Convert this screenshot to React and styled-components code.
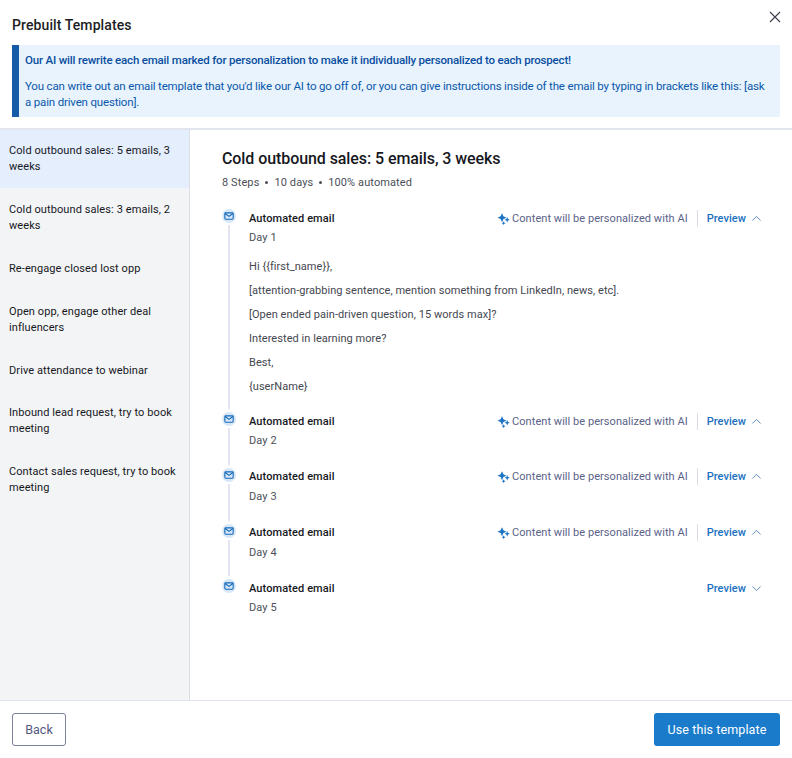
import React from "react";
import styled, { createGlobalStyle } from "styled-components";

const GlobalStyle = createGlobalStyle`
  html, body {
    margin: 0;
    padding: 0;
    background: #fff;
  }
  body {
    font-family: Roboto, "Liberation Sans", sans-serif;
    color: #16181d;
  }
`;

const Modal = styled.div`
  width: 792px;
  height: 758px;
  display: flex;
  flex-direction: column;
  background: #fff;
  overflow: hidden;
`;

const Header = styled.div`
  flex: none;
  padding: 0 12px 11px;
  border-bottom: 2px solid #e3e5ee;
`;

const TitleRow = styled.div`
  height: 45px;
  display: flex;
  align-items: flex-start;
  justify-content: space-between;
`;

const Title = styled.h1`
  margin: 15px 0 0;
  font-size: 14px;
  font-weight: 500;
  line-height: 20px;
  letter-spacing: 0.1px;
  color: #1c1e24;
`;

const CloseButton = styled.button`
  width: 14px;
  height: 14px;
  padding: 0;
  margin: 10px -2px 0 0;
  border: 0;
  background: none;
  color: #3a3d47;
  display: flex;
`;

const Banner = styled.div`
  background: #e8f3fd;
  border-left: 7px solid #155ca8;
  padding: 7px 12px 8px 6px;
  height: 72px;
  box-sizing: border-box;
  font-size: 11.5px;
  line-height: 16px;
  letter-spacing: -0.18px;
  color: #0b58ab;
`;

const BannerStrong = styled.p`
  margin: 0 0 10px;
  font-weight: 500;
  color: #0a4ea0;
`;

const BannerText = styled.p`
  margin: 0;
  letter-spacing: -0.17px;
`;

const Body = styled.div`
  flex: 1;
  min-height: 0;
  display: flex;
`;

const Sidebar = styled.nav`
  width: 189px;
  flex: none;
  background: #f3f4f6;
  border-right: 1px solid #dcdee6;
`;

const SideItem = styled.div`
  height: ${(p) => (p.$single ? "42.5px" : "59px")};
  padding: 13px 9px 0;
  box-sizing: border-box;
  border-bottom: 1px solid transparent;
  background-clip: padding-box;
  font-size: 11px;
  line-height: 16px;
  letter-spacing: 0.09px;
  color: #16181d;
  background-color: ${(p) => (p.$active ? "#e4eefd" : "transparent")};
`;

const Main = styled.main`
  flex: 1;
  min-width: 0;
  padding: 19px 30px 0 32px;
`;

const MainTitle = styled.h2`
  margin: 0;
  font-size: 16px;
  font-weight: 500;
  line-height: 20px;
  letter-spacing: -0.08px;
  color: #16181d;
`;

const Meta = styled.div`
  display: flex;
  align-items: center;
  gap: 6px;
  margin-top: 6px;
  margin-bottom: 21px;
  font-size: 11px;
  line-height: 15px;
  letter-spacing: 0.1px;
  color: #4c4f58;
`;

const Dot = styled.span`
  width: 3px;
  height: 3px;
  border-radius: 50%;
  background: #4c4f58;
`;

const Step = styled.div`
  display: flex;
  gap: 13px;
`;

const Rail = styled.div`
  flex: none;
  width: 14px;
  display: flex;
  flex-direction: column;
  align-items: center;
`;

const Line = styled.div`
  flex: 1;
  width: 2px;
  margin-top: 2px;
  margin-bottom: 5px;
  background: #e2e5ef;
`;

const IconBubble = styled.div`
  width: 14px;
  height: 14px;
  margin-top: -2px;
  border-radius: 50%;
  background: #d8e7f8;
  color: #1068b8;
  display: flex;
  align-items: center;
  justify-content: center;
  flex: none;
`;

const StepBody = styled.div`
  flex: 1;
  min-width: 0;
  padding-bottom: ${(p) => (p.$open ? "11px" : "21.8px")};
`;

const StepHead = styled.div`
  display: flex;
  align-items: center;
  height: 14px;
`;

const StepName = styled.div`
  flex: 1;
  font-size: 11px;
  font-weight: 500;
  letter-spacing: 0.1px;
  color: #16181d;
`;

const AiNote = styled.div`
  display: flex;
  align-items: center;
  gap: 2px;
  font-size: 11px;
  letter-spacing: 0.05px;
  color: #5a6288;
`;

const Divider = styled.div`
  width: 1px;
  height: 17px;
  margin: 0 9px;
  background: #d9dce5;
`;

const PreviewButton = styled.button`
  display: flex;
  align-items: center;
  gap: 5px;
  padding: 0;
  border: 0;
  background: none;
  font-family: inherit;
  font-size: 11px;
  font-weight: 500;
  letter-spacing: 0.05px;
  color: #1a6fbe;
`;

const Chevron = styled.svg`
  width: 11px;
  height: 11px;
  color: #4f7fb8;
`;

const Day = styled.div`
  margin-top: 5px;
  font-size: 11px;
  line-height: 15px;
  letter-spacing: 0.1px;
  color: #4c4f58;
`;

const EmailText = styled.div`
  margin-top: 14px;
  font-size: 11px;
  line-height: 15px;
  letter-spacing: 0.05px;
  color: #44474f;
`;

const EmailLine = styled.p`
  margin: 0 0 9px;
`;

const Footer = styled.div`
  flex: none;
  height: 58px;
  box-sizing: border-box;
  border-top: 1px solid #e0e1ea;
  padding: 12px 12px 0;
  display: flex;
  justify-content: space-between;
  align-items: flex-start;
`;

const BackButton = styled.button`
  width: 54px;
  height: 33px;
  box-sizing: border-box;
  border: 1px solid #7d80a0;
  border-radius: 3px;
  background: #fff;
  font-family: inherit;
  font-size: 12.5px;
  font-weight: 400;
  color: #55597f;
`;

const PrimaryButton = styled.button`
  width: 126px;
  height: 33px;
  border: 0;
  border-radius: 3px;
  background: #1a7bcb;
  font-family: inherit;
  font-size: 12.5px;
  font-weight: 400;
  letter-spacing: 0.1px;
  color: #fff;
`;

const MailIcon = () => (
  <svg width="10" height="10" viewBox="0 0 12 12" fill="none" stroke="currentColor" strokeWidth="1.3">
    <rect x="1" y="2.2" width="10" height="7.6" rx="1" />
    <path d="M1.3 3l4.7 3.4L10.7 3" />
  </svg>
);

const Sparkle = () => (
  <svg width="13" height="13" viewBox="0 0 13 13" fill="#1a73c4">
    <path d="M5 1.2l1.4 3.1 3.1 1.4-3.1 1.4L5 10.2 3.6 7.1.5 5.7l3.1-1.4z" />
    <path d="M10.2 5l.8 1.9 1.9.8-1.9.8-.8 1.9-.8-1.9-1.9-.8 1.9-.8z" />
    <path d="M6.6 9.2l.6 1.4 1.4.6-1.4.6-.6 1.4-.6-1.4-1.4-.6 1.4-.6z" />
  </svg>
);

const ChevronIcon = ({ $up }) => (
  <Chevron viewBox="0 0 12 12" fill="none" stroke="currentColor" strokeWidth="1">
    <path d={$up ? "M1.5 8.2L6 3.7l4.5 4.5" : "M1.5 3.8L6 8.3l4.5-4.5"} />
  </Chevron>
);

const templates = [
  { label: "Cold outbound sales: 5 emails, 3 weeks", active: true },
  { label: "Cold outbound sales: 3 emails, 2 weeks" },
  { label: "Re-engage closed lost opp", single: true },
  { label: "Open opp, engage other deal influencers" },
  { label: "Drive attendance to webinar", single: true },
  { label: "Inbound lead request, try to book meeting" },
  { label: "Contact sales request, try to book meeting" },
];

const steps = [
  { day: 1, ai: true, open: true },
  { day: 2, ai: true },
  { day: 3, ai: true },
  { day: 4, ai: true },
  { day: 5, last: true },
];

const emailLines = [
  "Hi {{first_name}},",
  "[attention-grabbing sentence, mention something from LinkedIn, news, etc].",
  "[Open ended pain-driven question, 15 words max]?",
  "Interested in learning more?",
  "Best,",
  "{userName}",
];

export default function App() {
  return (
    <Modal>
      <GlobalStyle />
      <Header>
        <TitleRow>
          <Title>Prebuilt Templates</Title>
          <CloseButton aria-label="Close">
            <svg width="14" height="14" viewBox="0 0 14 14" fill="none" stroke="currentColor" strokeWidth="1.1">
              <path d="M2 2l10 10M12 2L2 12" />
            </svg>
          </CloseButton>
        </TitleRow>
        <Banner>
          <BannerStrong>
            Our AI will rewrite each email marked for personalization to make it individually personalized to each prospect!
          </BannerStrong>
          <BannerText>
            You can write out an email template that you'd like our AI to go off of, or you can give instructions inside of the email by typing in brackets like this: [ask a pain driven question].
          </BannerText>
        </Banner>
      </Header>
      <Body>
        <Sidebar>
          {templates.map((t) => (
            <SideItem key={t.label} $active={t.active} $single={t.single}>
              {t.label}
            </SideItem>
          ))}
        </Sidebar>
        <Main>
          <MainTitle>Cold outbound sales: 5 emails, 3 weeks</MainTitle>
          <Meta>
            <span>8 Steps</span>
            <Dot />
            <span>10 days</span>
            <Dot />
            <span>100% automated</span>
          </Meta>
          {steps.map((s) => (
            <Step key={s.day}>
              <Rail>
                <IconBubble>
                  <MailIcon />
                </IconBubble>
                {!s.last && <Line />}
              </Rail>
              <StepBody $open={s.open}>
                <StepHead>
                  <StepName>Automated email</StepName>
                  {s.ai && (
                    <>
                      <AiNote>
                        <Sparkle />
                        Content will be personalized with AI
                      </AiNote>
                      <Divider />
                    </>
                  )}
                  <PreviewButton>
                    Preview
                    <ChevronIcon $up={!s.last} />
                  </PreviewButton>
                </StepHead>
                <Day>Day {s.day}</Day>
                {s.open && (
                  <EmailText>
                    {emailLines.map((l) => (
                      <EmailLine key={l}>{l}</EmailLine>
                    ))}
                  </EmailText>
                )}
              </StepBody>
            </Step>
          ))}
        </Main>
      </Body>
      <Footer>
        <BackButton>Back</BackButton>
        <PrimaryButton>Use this template</PrimaryButton>
      </Footer>
    </Modal>
  );
}
